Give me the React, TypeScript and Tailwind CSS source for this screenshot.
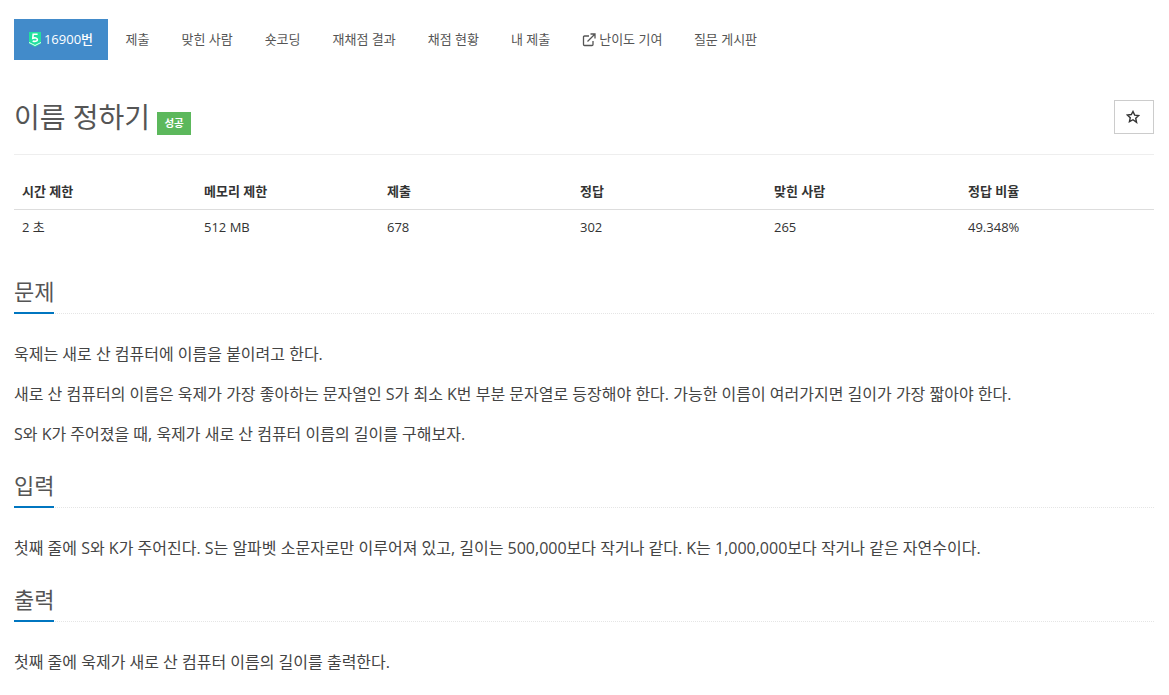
import React from "react";

const navItems = ["제출", "맞힌 사람", "숏코딩", "재채점 결과", "채점 현황", "내 제출"];

const stats = [
  { label: "시간 제한", value: "2 초", width: "w-[182px]" },
  { label: "메모리 제한", value: "512 MB", width: "w-[183px]" },
  { label: "제출", value: "678", width: "w-[193px]" },
  { label: "정답", value: "302", width: "w-[194px]" },
  { label: "맞힌 사람", value: "265", width: "w-[194px]" },
  { label: "정답 비율", value: "49.348%", width: "flex-1" },
];

const Heading = ({ children }: { children: React.ReactNode }) => (
  <div className="mb-[28px] border-b border-dotted border-[#e5e5e5]">
    <h2 className="inline-block text-[22px] leading-[30px] pb-[6px] mb-[-1px] border-b-2 border-[#0076c0] text-[#555]">
      {children}
    </h2>
  </div>
);

export default function App() {
  return (
    <div className="h-[695px] overflow-hidden bg-white pl-[14px] pr-[15px] pt-[19px] text-[16px] text-[#444] font-['Open_Sans','Noto_Sans_CJK_KR',sans-serif]">
      <nav className="flex h-[41px] items-center text-[13px] text-[#555]">
        <a className="mr-[1.5px] flex h-full w-[94px] items-center justify-center gap-[3px] bg-[#428bca] text-[13px] font-medium text-white">
          <svg width="12" height="15" viewBox="0 0 12 15">
            <path d="M0 0h12v11.500L6 15 0 11.500z" fill="#22e0a0" />
            <path d="M0 10.500L6 13.500l6-3" fill="none" stroke="#e8fff6" strokeWidth="1" />
            <path d="M8.600 2.200H4.200L3.800 6.200c1.700-.7 4.600-.4 4.600 1.500 0 1.800-2.900 2-4.700 1.200" fill="none" stroke="#fff" strokeWidth="1.600" />
          </svg>
          <span>16900번</span>
        </a>
        {navItems.map((item) => (
          <a key={item} className="px-[16px] whitespace-nowrap">
            {item}
          </a>
        ))}
        <a className="flex items-center gap-[3px] pl-[16px] pr-[15.5px] whitespace-nowrap">
          <svg width="14" height="14" viewBox="0 0 14 14" fill="none" stroke="#555" strokeWidth="1.300">
            <path d="M11 8v3.500a1 1 0 0 1-1 1H2.500a1 1 0 0 1-1-1V4a1 1 0 0 1 1-1H7" />
            <path d="M5.500 8.500L12.500 1.500M8.500 1h4.500v4.500" />
          </svg>
          난이도 기여
        </a>
        <a className="px-[16px] whitespace-nowrap">질문 게시판</a>
      </nav>

      <div className="mt-[40px] flex h-[55px] items-start justify-between border-b border-[#eee]">
        <div className="flex items-start">
          <h1 className="text-[28px] leading-[34px] text-[#555]">이름 정하기</h1>
          <span className="ml-[7px] mt-[12px] flex h-[23px] w-[34px] items-center justify-center bg-[#5cb85c] text-[10.5px] font-bold text-white">
            성공
          </span>
        </div>
        <button className="flex h-[34px] w-[40px] items-center justify-center border border-[#ccc] bg-white pr-[2px]">
          <svg width="14" height="14" viewBox="0 0 24 24" fill="none" stroke="#333" strokeWidth="2.400">
            <path d="M12 2.500l2.900 6.300 6.900.8-5.100 4.700 1.400 6.800L12 16.700l-6.100 3.400 1.400-6.800-5.100-4.700 6.900-.8z" />
          </svg>
        </button>
      </div>

      <div className="mt-[20px] text-[13px]">
        <div className="flex h-[35px] items-center border-b border-[#ddd] font-bold text-[#333]">
          {stats.map((s) => (
            <div key={s.label} className={`${s.width} px-[8px]`}>
              {s.label}
            </div>
          ))}
        </div>
        <div className="flex h-[36px] items-center text-[#333]">
          {stats.map((s) => (
            <div key={s.label} className={`${s.width} px-[8px]`}>
              {s.value}
            </div>
          ))}
        </div>
      </div>

      <section className="mt-[30px]">
        <Heading>문제</Heading>
        <p className="mb-[16px] leading-[24px]">욱제는 새로 산 컴퓨터에 이름을 붙이려고 한다.</p>
        <p className="mb-[16px] leading-[24px] whitespace-nowrap">
          새로 산 컴퓨터의 이름은 욱제가 가장 좋아하는 문자열인 S가 최소 K번 부분 문자열로 등장해야 한다. 가능한 이름이 여러가지면 길이가 가장 짧아야 한다.
        </p>
        <p className="leading-[24px]">S와 K가 주어졌을 때, 욱제가 새로 산 컴퓨터 이름의 길이를 구해보자.</p>
      </section>

      <section className="mt-[24px]">
        <Heading>입력</Heading>
        <p className="leading-[24px] whitespace-nowrap">
          첫째 줄에 S와 K가 주어진다. S는 알파벳 소문자로만 이루어져 있고, 길이는 500,000보다 작거나 같다. K는 1,000,000보다 작거나 같은 자연수이다.
        </p>
      </section>

      <section className="mt-[24px]">
        <Heading>출력</Heading>
        <p className="leading-[24px]">첫째 줄에 욱제가 새로 산 컴퓨터 이름의 길이를 출력한다.</p>
      </section>
    </div>
  );
}
